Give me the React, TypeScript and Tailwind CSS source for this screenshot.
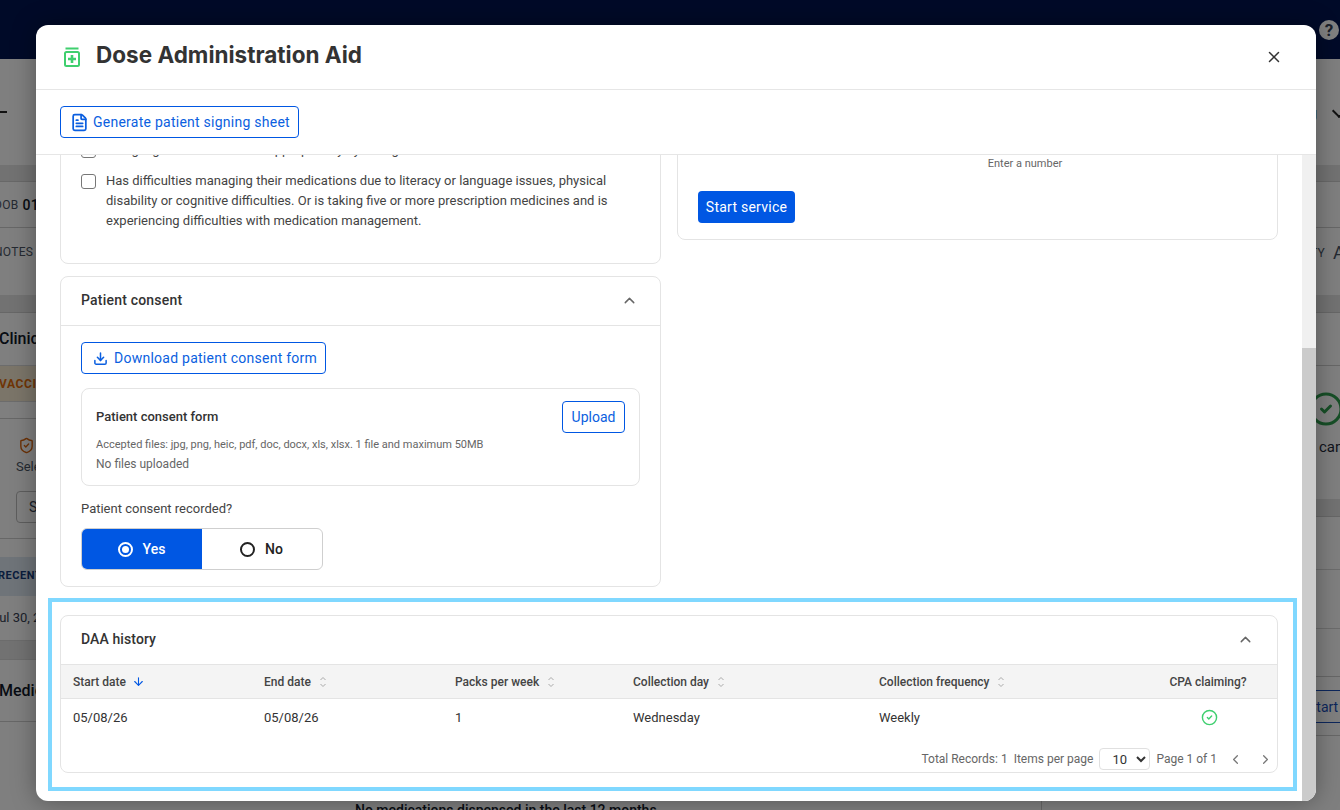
import React from 'react';
import { ArrowDown, ChevronLeft, ChevronRight, ChevronUp, CircleCheck, Download, FileText, ShieldCheck, X } from 'lucide-react';

const columns = [
  { label: 'Start date', sort: 'active' },
  { label: 'End date', sort: 'idle' },
  { label: 'Packs per week', sort: 'idle' },
  { label: 'Collection day', sort: 'idle' },
  { label: 'Collection frequency', sort: 'idle' }
];
const row = ['05/08/26', '05/08/26', '1', 'Wednesday', 'Weekly'];

// Small up/down pair, thinner and more spaced than the lucide one
const SortIcon = () => {
  return <svg width="8" height="12" viewBox="0 0 8 12" fill="none" className="ml-[8px]">
      <path d="M1.5 4L4 1.5L6.5 4M1.5 8L4 10.5L6.5 8" stroke="#aaaaaa" strokeWidth="1" />
    </svg>;
};

// What sits behind the modal; only the slivers at the sides stay visible
const PageBehind = () => {
  return <div className="h-[810px] overflow-hidden bg-white">
      <div className="flex h-[59px] justify-end bg-[#001450] pr-px pt-5">
        <div className="flex h-5 w-5 items-center justify-center rounded-full bg-white text-[17px] font-bold leading-none text-gray-700">?</div>
      </div>
      <div className="flex h-[106px] items-start justify-between pt-[44px]">
        <div className="mt-[8px] h-[2px] w-[7px] bg-[#222]"></div>
        <div className="flex items-center gap-[17px] text-sm text-gray-800">
          <span>Setting</span>
          <span className="-mr-[4px] h-[10px] w-[10px] -translate-y-[2px] rotate-45 border-b-2 border-r-2 border-[#222]"></span>
        </div>
      </div>
      <div className="h-[17px] border-b border-[#d0d0d0] bg-[#e4e4e4]"></div>
      <div className="flex h-[46px] items-center border-b border-[#cfcfcf] text-xs tracking-wide text-gray-600">
        <span className="-ml-[6px]">DOB</span>
        <span className="ml-1 text-sm font-medium text-gray-900">01/01/1960</span>
      </div>
      <div className="flex h-[67px] justify-between pt-4 text-xs tracking-wide text-gray-600">
        <span className="-ml-[6px]">NOTES</span>
        <span className="-mr-[5px] flex items-center self-start">TY<span className="ml-2 text-lg leading-none">A</span></span>
      </div>
      <div className="h-[18px] border-b border-[#cfcfcf] bg-[#e4e4e4]"></div>
      <div className="flex">
        <div className="w-[1042px] border-r border-[#cfcfcf]">
          <div className="-ml-px flex h-[52px] items-center text-base font-medium text-gray-900">Clinical</div>
          <div className="flex h-[37px] items-center border-y border-[#d8d8d8] bg-[#f6ead2] text-xs font-bold tracking-wider text-[#e06a0a]">
            <span className="-ml-px">VACCINES</span>
          </div>
          <div className="mt-4 h-[121px] border-y border-[#cfcfcf] pl-4 pt-[18px]">
            <ShieldCheck className="ml-[2px] h-[17px] w-[17px] text-[#d9650f]" />
            <div className="mt-[3px] text-[13px] text-gray-600">Select</div>
            <div className="mt-[14px] flex h-8 w-[120px] items-center rounded border border-[#bdbdbd] pl-3 text-sm text-gray-700">Select</div>
          </div>
          <div className="mt-[18px] flex h-[39px] items-center bg-[#dfe8f2] text-[11px] font-bold tracking-wider text-[#123a7a]">
            <span className="-ml-[2px]">RECENT</span>
          </div>
          <div className="flex h-[44px] items-center text-[13px] text-gray-700">
            <span className="-ml-[8px]">Jul 30, 2025</span>
          </div>
          <div className="h-5 border-y border-[#d8d8d8] bg-[#e4e4e4]"></div>
          <div className="flex h-[62px] items-center border-b border-[#cfcfcf] text-base font-medium text-gray-900">
            <span className="-ml-px">Medicines</span>
          </div>
          <div className="pl-[355px] pt-[78px] text-sm font-medium text-gray-900">No medications dispensed in the last 12 months</div>
        </div>
        <div className="min-w-0 flex-1 whitespace-nowrap">
          <div className="h-[53px] border-b border-[#cfcfcf]"></div>
          <div className="h-[133px] pl-[266px] pt-[25px]">
            <CircleCheck className="h-9 w-9 text-[#2e9e4f]" strokeWidth={2} />
            <div className="ml-[11px] mt-[9px] text-[15px] text-gray-800">can</div>
          </div>
          <div className="h-[18px] border-b border-[#cfcfcf] bg-[#e4e4e4]"></div>
          <div className="h-[53px] border-b border-[#d8d8d8]"></div>
          <div className="h-[59px] border-b border-[#d8d8d8]"></div>
          <div className="h-[48px] border-b border-[#cfcfcf]"></div>
          <div className="h-[59px] border-b border-[#cfcfcf] pt-[13px]">
            <div className="flex h-[33px] items-center border-y border-[#1a4fb8] pl-[266px] text-sm text-[#1a4fb8]">Start</div>
          </div>
        </div>
      </div>
    </div>;
};

const DaaHistory = () => {
  return <div className="relative">
      <div className="h-[158px] rounded-lg border border-[#e4e4e4]">
        <div className="flex h-[49px] items-center justify-between border-b border-[#e4e4e4] pb-[2px] pl-5 pr-[23px]">
          <span className="text-sm font-medium tracking-[0.1px] text-[#333]">DAA history</span>
          <ChevronUp className="h-[17px] w-[17px] text-[#666]" />
        </div>
        <div className="grid h-[34px] grid-cols-[191px_191px_178px_246px_291px_119px] items-center border-b border-[#e4e4e4] bg-[#f4f4f4] text-xs font-medium text-[#444]">
          {columns.map(col => <div key={col.label} className="flex items-center pl-3">
              {col.label}
              {col.sort === 'active' ? <ArrowDown className="ml-[6px] h-[13px] w-[13px] text-[#0057e3]" /> : <SortIcon />}
            </div>)}
          <div className="pr-[19px] text-center">CPA claiming?</div>
        </div>
        <div className="grid h-[37px] grid-cols-[191px_191px_178px_246px_291px_119px] items-center text-[13px] text-[#333]">
          {row.map((cell, i) => <div key={i} className="pl-3">{cell}</div>)}
          <div className="flex justify-center pr-[17px]">
            <CircleCheck className="h-[17px] w-[17px] text-[#3ecf6e]" />
          </div>
        </div>
        <div className="mt-[12px] flex items-center justify-end text-xs text-[#666]">
          <span>Total Records: 1</span>
          <span className="ml-[6px]">Items per page</span>
          <select defaultValue="10" className="ml-[6px] h-[22px] w-[51px] rounded border border-[#e0e0e0] bg-white pl-2 text-[13px] text-[#333]">
            <option value="10">10</option>
            <option value="25">25</option>
          </select>
          <span className="ml-[6px]">Page 1 of 1</span>
          <ChevronLeft className="ml-[11px] h-[15px] w-[15px] text-[#777]" />
          <ChevronRight className="ml-[15px] mr-[4px] h-[15px] w-[15px] text-[#777]" />
        </div>
      </div>
      <div className="pointer-events-none absolute -bottom-[18px] -left-[12px] -right-[19px] -top-[17px] border-4 border-[#80d8ff]"></div>
    </div>;
};

export default function App() {
  return <div className="relative h-[810px] w-[1340px] overflow-hidden font-['Roboto',sans-serif]">
      <PageBehind />
      <div className="absolute inset-0 bg-black/50"></div>
      <div className="absolute left-[36px] top-[25px] flex h-[776px] w-[1280px] flex-col overflow-hidden rounded-xl bg-white shadow-[0_0_24px_rgba(0,0,0,0.35)]">
        <div className="flex h-[65px] items-center justify-between border-b border-[#e6e6e6] pl-[28px] pr-[33px]">
          <div className="-mt-[4px] flex items-center">
            <svg width="16" height="20" viewBox="0 0 16 20" fill="none" className="mt-[3px]">
              <rect x="1.5" y="0.5" width="13" height="2" fill="#3fcf6e" />
              <rect x="1" y="5" width="14" height="14" rx="1.5" stroke="#3fcf6e" strokeWidth="2" />
              <path d="M8 8v8M4 12h8" stroke="#3fcf6e" strokeWidth="2.6" />
            </svg>
            <h1 className="ml-4 font-['Inter',sans-serif] text-[22.5px] font-bold text-[#333]">Dose Administration Aid</h1>
          </div>
          <X className="h-[18px] w-[18px] text-[#333]" />
        </div>
        <div className="flex h-[65px] items-center border-b border-[#e6e6e6] pl-6">
          <button type="button" className="flex h-8 items-center rounded border border-[#0057e3] pl-[9px] pr-2 text-sm tracking-[0.25px] text-[#0b5fe0]">
            <FileText className="mr-[4px] h-[19px] w-[19px]" strokeWidth={2.2} />
            Generate patient signing sheet
          </button>
        </div>
        <div className="flex min-h-0 flex-1">
          <div className="min-w-0 flex-1 overflow-hidden px-6">
            <div className="-mt-[40px] mb-[28px] grid grid-cols-2 items-start gap-4">
              <div className="flex flex-col gap-3">
                <div className="flex h-[149px] flex-col gap-[11px] rounded-lg border border-[#e4e4e4] px-5 pt-6 text-[13px] leading-5 text-[#444]">
                  <label className="flex items-start gap-[10px]">
                    <input type="checkbox" className="mt-[3px] h-[15px] w-[15px] shrink-0 appearance-none rounded-[3px] border border-[#777]" />
                    <span>Using high-risk medicines inappropriately by taking</span>
                  </label>
                  <label className="flex items-start gap-[10px]">
                    <input type="checkbox" className="mt-[3px] h-[15px] w-[15px] shrink-0 appearance-none rounded-[3px] border border-[#777]" />
                    <span>Has difficulties managing their medications due to literacy or language issues, physical disability or cognitive difficulties. Or is taking five or more prescription medicines and is experiencing difficulties with medication management.</span>
                  </label>
                </div>
                <div className="h-[311px] rounded-lg border border-[#e4e4e4]">
                  <div className="flex h-[49px] items-center justify-between border-b border-[#e4e4e4] pb-[2px] pl-5 pr-[22px]">
                    <span className="text-sm font-medium tracking-[0.2px] text-[#333]">Patient consent</span>
                    <ChevronUp className="h-[17px] w-[17px] text-[#666]" />
                  </div>
                  <div className="px-5 pt-4">
                    <button type="button" className="flex h-8 items-center rounded border border-[#0057e3] pl-[11px] pr-2 text-sm tracking-[0.25px] text-[#0b5fe0]">
                      <Download className="mr-[6px] h-[15px] w-[15px]" strokeWidth={2.4} />
                      Download patient consent form
                    </button>
                    <div className="mt-[14px] flex h-[98px] justify-between rounded-lg border border-[#e4e4e4] pl-[14px] pr-[14px] pt-3">
                      <div>
                        <div className="mt-[8px] text-[13px] font-medium leading-4 text-[#333]">Patient consent form</div>
                        <div className="mt-[12px] text-[11px] leading-4 text-[#666]">Accepted files: jpg, png, heic, pdf, doc, docx, xls, xlsx. 1 file and maximum 50MB</div>
                        <div className="mt-[3px] text-xs leading-4 text-[#666]">No files uploaded</div>
                      </div>
                      <button type="button" className="h-8 w-[63px] rounded border border-[#0057e3] text-sm text-[#0b5fe0]">Upload</button>
                    </div>
                    <div className="mt-[15px] text-[13px] leading-4 text-[#444]">Patient consent recorded?</div>
                    <div className="mt-[11px] flex h-[42px] w-[242px] overflow-hidden rounded-md border border-[#cfcfcf] text-sm font-medium">
                      <div className="-m-px flex w-[121px] items-center justify-center gap-[10px] bg-[#0057e3] text-white">
                        <span className="flex h-[15px] w-[15px] items-center justify-center rounded-full border-2 border-white">
                          <span className="h-[7px] w-[7px] rounded-full bg-white"></span>
                        </span>
                        Yes
                      </div>
                      <div className="flex flex-1 items-center justify-center gap-[10px] text-[#222]">
                        <span className="h-[15px] w-[15px] rounded-full border-2 border-[#222]"></span>
                        No
                      </div>
                    </div>
                  </div>
                </div>
              </div>
              <div className="h-[125px] rounded-lg border border-[#e4e4e4] pt-[40px]">
                <div className="pl-[95px] text-center text-[11px] leading-4 text-[#666]">Enter a number</div>
                <button type="button" className="ml-5 mt-[19px] h-8 w-[97px] rounded bg-[#0057e3] text-sm tracking-[0.25px] text-white">Start service</button>
              </div>
            </div>
            <DaaHistory />
          </div>
          <div className="flex w-[14px] flex-col bg-[#f0f0f0]">
            <div className="h-[193px]"></div>
            <div className="flex-1 bg-[#cbcbcb]"></div>
          </div>
        </div>
      </div>
    </div>;
}
